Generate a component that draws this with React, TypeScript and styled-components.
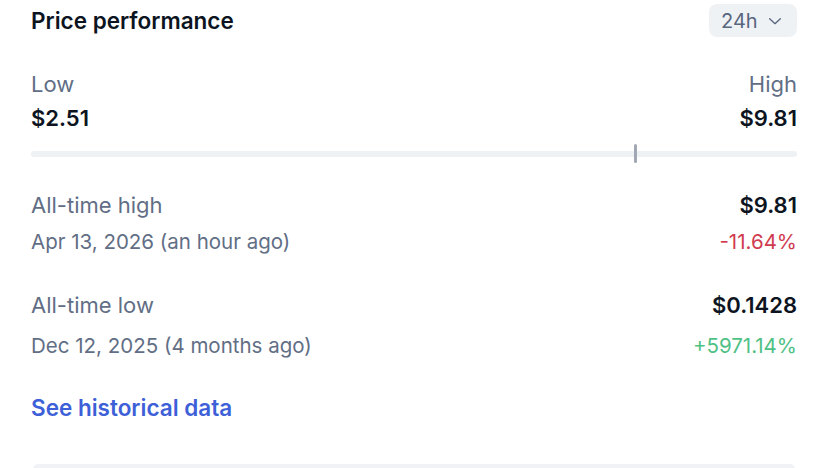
import {createGlobalStyle, styled} from 'styled-components';

const GlobalStyle = createGlobalStyle`
    html, body {
        margin: 0;
        padding: 0;
        background: #ffffff;
        font-family: Inter, "Noto Sans", sans-serif;
        -webkit-font-smoothing: antialiased;
        overflow: hidden;
    }
`;

const Panel = styled.div`
    width: 828px;
    box-sizing: border-box;
    padding: 4px 31px 0 31px;
    display: flex;
    flex-direction: column;
`;

const Header = styled.div`
    display: flex;
    justify-content: space-between;
    align-items: center;
    height: 33px;
`;

const Title = styled.h2`
    margin: -1px 0 0 0;
    font-size: 22.5px;
    font-weight: 600;
    color: #0d1421;
`;

const RangeSelect = styled.button`
    display: flex;
    align-items: center;
    gap: 9px;
    width: 88px;
    height: 33px;
    padding: 0 0 0 12px;
    border: none;
    border-radius: 8px;
    background: #eff2f5;
    color: #58667e;
    font-family: inherit;
    font-size: 20px;
    font-weight: 400;
`;

const RangeRow = styled.div`
    display: flex;
    justify-content: space-between;
    margin-top: 33px;
`;

const RangeCol = styled.div<{$align: 'left' | 'right'}>`
    display: flex;
    flex-direction: column;
    align-items: ${p => (p.$align === 'left' ? 'flex-start' : 'flex-end')};
    gap: 6px;
`;

const MutedLabel = styled.span`
    font-size: 22px;
    line-height: 28px;
    color: #616e85;
`;

const Price = styled.span`
    font-size: 22px;
    line-height: 28px;
    font-weight: 600;
    color: #0d1421;
`;

const Track = styled.div`
    position: relative;
    margin-top: 19px;
    height: 6px;
    border-radius: 3px;
    background: #eff2f5;
`;

const Marker = styled.div`
    position: absolute;
    top: -7px;
    width: 3px;
    height: 19px;
    border-radius: 2px;
    background: #a1a7b3;
    transform: translateX(-1px);
`;

const StatRow = styled.div<{$top: number}>`
    display: flex;
    justify-content: space-between;
    margin-top: ${p => p.$top}px;
`;

const StatCol = styled.div<{$align: 'left' | 'right'; $gap: number}>`
    display: flex;
    flex-direction: column;
    align-items: ${p => (p.$align === 'left' ? 'flex-start' : 'flex-end')};
    gap: ${p => p.$gap}px;
`;

const DateText = styled.span`
    font-size: 20.5px;
    line-height: 26px;
    color: #616e85;
`;

const Change = styled.span<{$up: boolean}>`
    font-size: 20.5px;
    line-height: 26px;
    color: ${p => (p.$up ? '#4fc185' : '#d03c4f')};
`;

const HistoryLink = styled.a`
    align-self: flex-start;
    margin-top: 35px;
    font-size: 22.5px;
    line-height: 28px;
    font-weight: 600;
    color: #3d5fd8;
    text-decoration: none;
`;

const BottomCard = styled.div`
    margin: 42px 2px 0 2px;
    height: 5px;
    border-radius: 10px 10px 0 0;
    background: #f0f2f5;
`;

const Chevron = () => (
    <svg width="16" height="16" viewBox="0 0 24 24" fill="none" stroke="#58667e" strokeWidth="2" strokeLinecap="round" strokeLinejoin="round">
        <polyline points="4 8.5 12 16 20 8.5" />
    </svg>
);

const stats = [
    {label: 'All-time high', date: 'Apr 13, 2026 (an hour ago)', price: '$9.81', change: '-11.64%', up: false, top: 34, gap: 10},
    {label: 'All-time low', date: 'Dec 12, 2025 (4 months ago)', price: '$0.1428', change: '+5971.14%', up: true, top: 36, gap: 14},
];

const App = () => {
    const low = 2.51;
    const high = 9.81;
    const current = 8.27;
    const pos = ((current - low) / (high - low)) * 100;

    return (
        <Panel>
            <GlobalStyle />
            <Header>
                <Title>Price performance</Title>
                <RangeSelect>
                    24h
                    <Chevron />
                </RangeSelect>
            </Header>
            <RangeRow>
                <RangeCol $align='left'>
                    <MutedLabel>Low</MutedLabel>
                    <Price>$2.51</Price>
                </RangeCol>
                <RangeCol $align='right'>
                    <MutedLabel>High</MutedLabel>
                    <Price>$9.81</Price>
                </RangeCol>
            </RangeRow>
            <Track>
                <Marker style={{left: `${pos}%`}} />
            </Track>
            {stats.map(s => (
                <StatRow key={s.label} $top={s.top}>
                    <StatCol $align='left' $gap={s.gap}>
                        <MutedLabel>{s.label}</MutedLabel>
                        <DateText>{s.date}</DateText>
                    </StatCol>
                    <StatCol $align='right' $gap={s.gap}>
                        <Price>{s.price}</Price>
                        <Change $up={s.up}>{s.change}</Change>
                    </StatCol>
                </StatRow>
            ))}
            <HistoryLink href='#'>See historical data</HistoryLink>
            <BottomCard />
        </Panel>
    );
};

export default App;
